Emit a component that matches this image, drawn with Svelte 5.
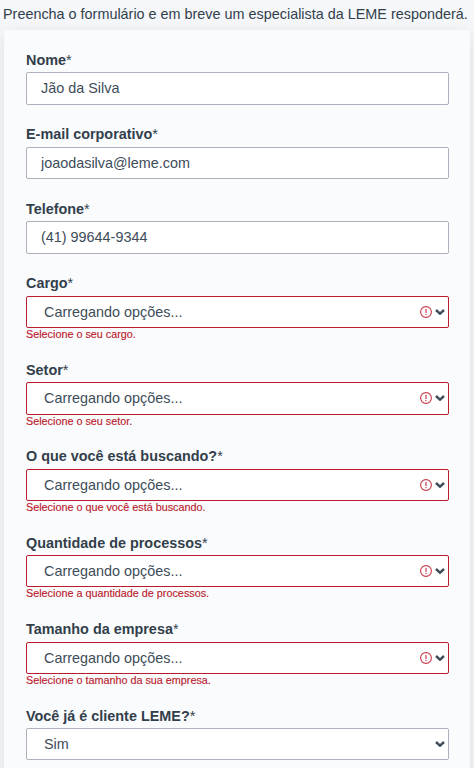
<script>
  const fields = [
    { id: 'nome', label: 'Nome', value: 'Jão da Silva' },
    { id: 'email', label: 'E-mail corporativo', value: 'joaodasilva@leme.com' },
    { id: 'telefone', label: 'Telefone', value: '(41) 99644-9344' },
    { id: 'cargo', label: 'Cargo', option: 'Carregando opções...', error: 'Selecione o seu cargo.' },
    { id: 'setor', label: 'Setor', option: 'Carregando opções...', error: 'Selecione o seu setor.' },
    { id: 'busca', label: 'O que você está buscando?', option: 'Carregando opções...', error: 'Selecione o que você está buscando.' },
    { id: 'processos', label: 'Quantidade de processos', option: 'Carregando opções...', error: 'Selecione a quantidade de processos.' },
    { id: 'tamanho', label: 'Tamanho da empresa', option: 'Carregando opções...', error: 'Selecione o tamanho da sua empresa.' },
    { id: 'cliente', label: 'Você já é cliente LEME?', option: 'Sim' }
  ];
</script>

<main>
  <p class="intro">Preencha o formulário e em breve um especialista da LEME responderá.</p>
  <form class="card">
    {#each fields as field}
      <div class="field" class:invalid={field.error}>
        <label for={field.id}>{field.label}<span>*</span></label>
        {#if field.option}
          <div class="control">
            <select id={field.id}><option>{field.option}</option></select>
            <div class="icons">
              {#if field.error}
                <svg width="12" height="12" viewBox="0 0 12 12" fill="none" stroke="#c93a4b">
                  <circle cx="6" cy="6" r="5.4" stroke-width="1.1" />
                  <path d="M6 2.9v4.2M6 8v1.1" stroke-width="1.2" />
                </svg>
              {/if}
              <svg width="10" height="6" viewBox="0 0 10 6" fill="none" stroke="#3e4c59" stroke-width="2.4">
                <path d="M1 1l4 3.7L9 1" />
              </svg>
            </div>
          </div>
        {:else}
          <input id={field.id} value={field.value} />
        {/if}
        {#if field.error}<p class="error">{field.error}</p>{/if}
      </div>
    {/each}
  </form>
</main>

<style>
  :global(body) { margin: 0; background: #f3f5f7; }
  main {
    box-sizing: border-box;
    height: 768px;
    overflow: hidden;
    padding: 0 4px;
    background: #f5f7fa;
    font-family: "Liberation Sans", Arial, sans-serif;
    color: #323f4b;
  }
  .intro {
    height: 30px;
    margin: 0 0 0 -1px;
    font-size: 14.4px;
    line-height: 29px;
    white-space: nowrap;
  }
  .card {
    box-sizing: border-box;
    height: 800px;
    padding: 20.08px 21px 0 22px;
    border-radius: 1px;
    background: #fafbfd;
    box-shadow: 0 4px 16px rgba(0, 0, 0, 0.1);
  }
  .field { height: 74.41px; }
  .field.invalid { height: 86.46px; }
  label {
    display: block;
    height: 22.41px;
    font-size: 14.4px;
    line-height: 21px;
    font-weight: 700;
  }
  label span { font-weight: 400; }
  .control { position: relative; height: 32.41px; }
  input, select {
    display: block;
    box-sizing: border-box;
    width: 100%;
    height: 32.41px;
    margin: 0;
    padding: 0 14px;
    border: 1px solid #acb1bd;
    border-radius: 2px;
    outline: 0;
    appearance: none;
    background: #fff;
    color: #3e4c59;
    font: 14.4px "Liberation Sans", Arial, sans-serif;
  }
  #nome, #telefone { padding-bottom: 1px; }
  select { padding-left: 17px; }
  .invalid select { border-color: #ba1b2d; }
  .icons {
    position: absolute;
    top: 0;
    right: 4px;
    height: 32px;
    display: flex;
    align-items: center;
    gap: 3px;
    pointer-events: none;
  }
  .error {
    margin: 0;
    font-size: 10.8px;
    line-height: 13px;
    color: #ba1b2d;
    -webkit-text-stroke: 0.15px #ba1b2d;
  }
</style>
